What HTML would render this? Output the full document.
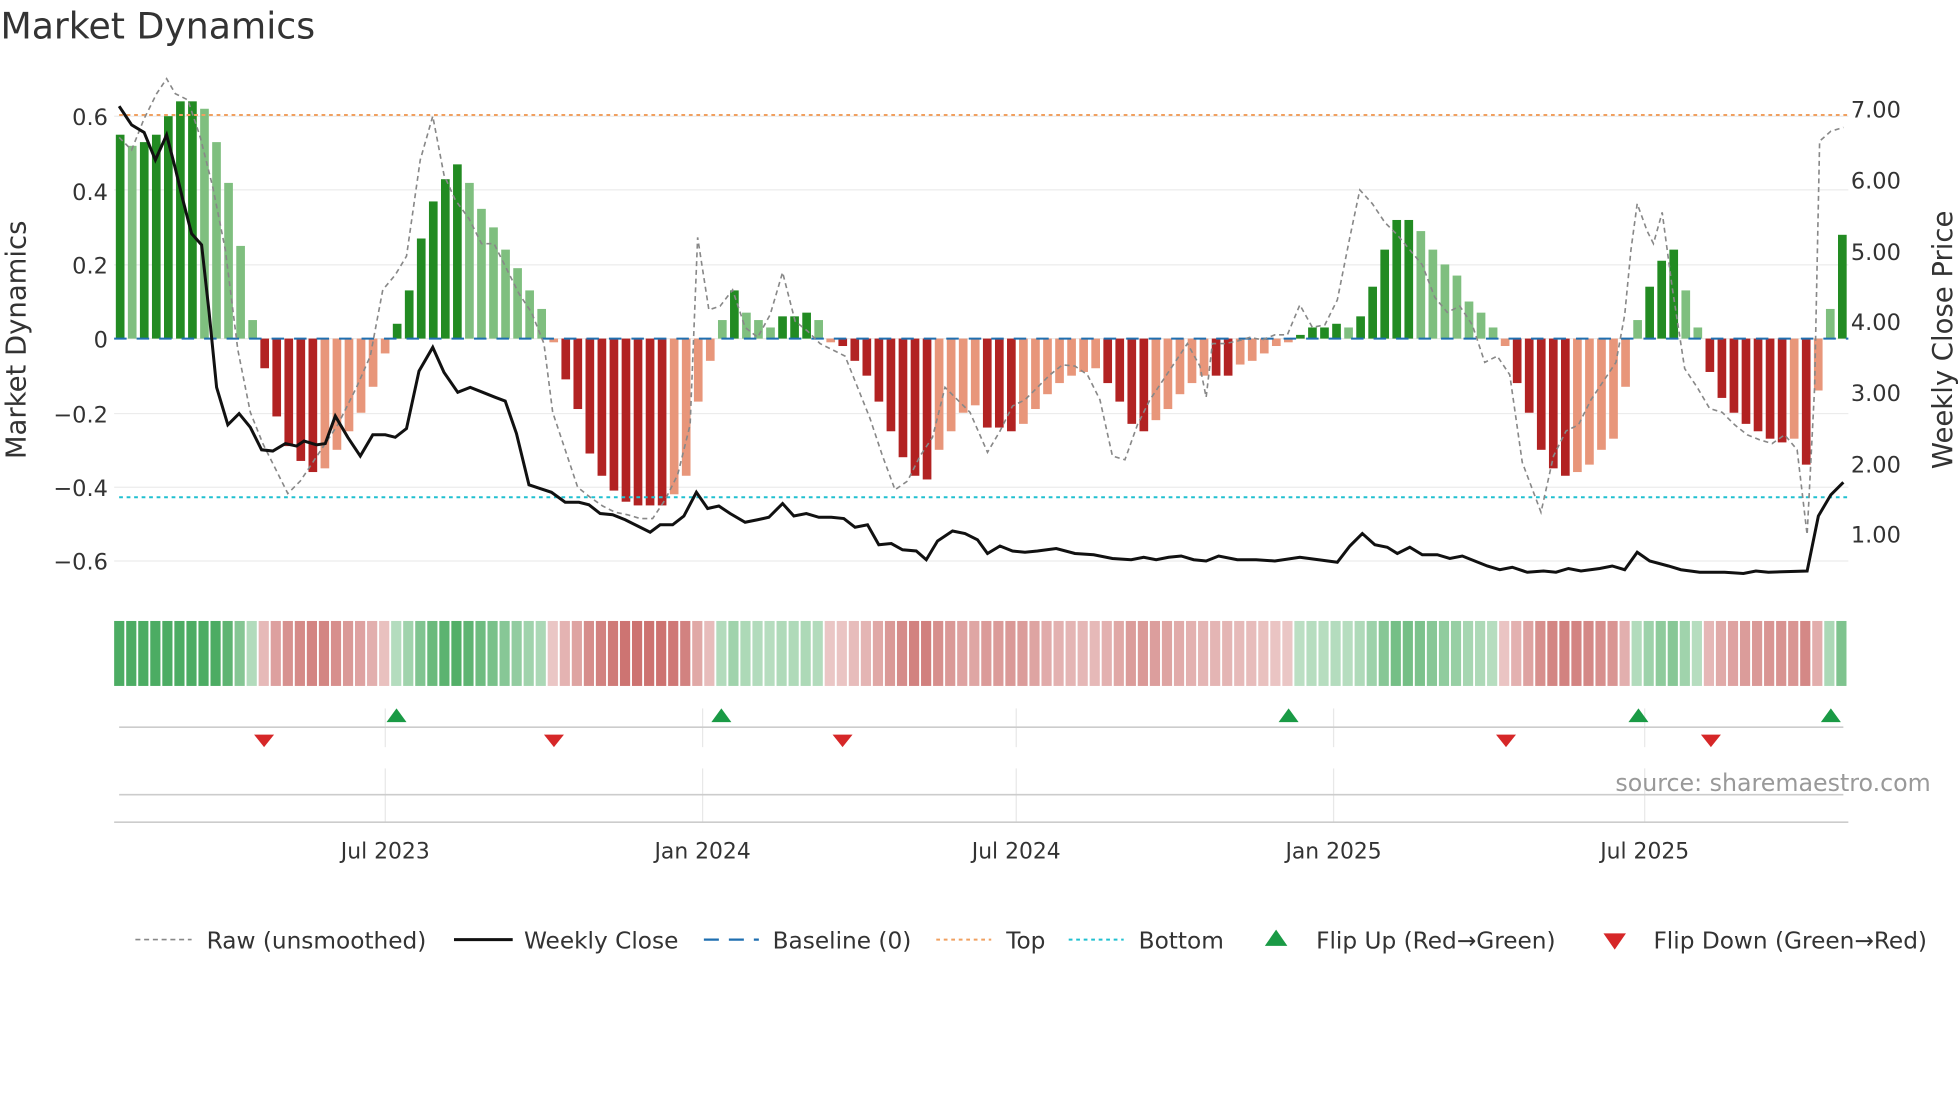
<!DOCTYPE html>
<html><head><meta charset="utf-8"><style>
html,body{margin:0;padding:0;background:#fff;}
svg{display:block;font-family:"DejaVu Sans","Liberation Sans",sans-serif;}
</style></head><body>
<svg id="s" width="1960" height="1102" viewBox="0 0 1568 882" xmlns="http://www.w3.org/2000/svg">
<text x="0" y="31" font-size="29" fill="#333">Market Dynamics</text>
<g id="grid" stroke="#ececec" stroke-width="1"></g>
<g id="bars"></g>
<g id="strip"></g>
<line x1="91" y1="271" x2="1479" y2="271" stroke="#1f6fb0" stroke-width="1.6" stroke-dasharray="10,8"/>
<line x1="95" y1="92" x2="1479" y2="92" stroke="#f0a060" stroke-width="1.6" stroke-dasharray="3,3"/>
<line x1="95" y1="398" x2="1479" y2="398" stroke="#20c0d0" stroke-width="1.6" stroke-dasharray="3,3"/>
<polyline id="raw" fill="none" stroke="#888" stroke-width="1.3" stroke-dasharray="4,3"/>
<polyline id="close" fill="none" stroke="#111" stroke-width="2.4"/>
<g font-size="18" fill="#333" text-anchor="end">
<text x="86" y="100">0.6</text><text x="86" y="160">0.4</text><text x="86" y="219">0.2</text><text x="86" y="278">0</text>
<text x="86" y="338">−0.2</text><text x="86" y="397">−0.4</text><text x="86" y="456">−0.6</text>
</g>
<g font-size="18" fill="#333">
<text x="1481" y="94">7.00</text><text x="1481" y="151">6.00</text><text x="1481" y="208">5.00</text><text x="1481" y="264">4.00</text>
<text x="1481" y="321">3.00</text><text x="1481" y="378">2.00</text><text x="1481" y="434">1.00</text>
</g>
<text transform="translate(20,272) rotate(-90)" font-size="22" fill="#333" text-anchor="middle">Market Dynamics</text>
<text transform="translate(1562,272) rotate(-90)" font-size="22" fill="#333" text-anchor="middle">Weekly Close Price</text>
<g stroke="#e8e8e8"><line x1="308" y1="567" x2="308" y2="598"/><line x1="562" y1="567" x2="562" y2="598"/><line x1="813" y1="567" x2="813" y2="598"/><line x1="1067" y1="567" x2="1067" y2="598"/><line x1="1316" y1="567" x2="1316" y2="598"/>
<line x1="308" y1="615" x2="308" y2="658"/><line x1="562" y1="615" x2="562" y2="658"/><line x1="813" y1="615" x2="813" y2="658"/><line x1="1067" y1="615" x2="1067" y2="658"/><line x1="1316" y1="615" x2="1316" y2="658"/></g>
<line x1="95" y1="582" x2="1475" y2="582" stroke="#ccc" stroke-width="1.3"/>
<line x1="95" y1="636" x2="1475" y2="636" stroke="#ccc" stroke-width="1.3"/>
<line x1="91" y1="658" x2="1479" y2="658" stroke="#ccc" stroke-width="1.3"/>
<g fill="#1a9a45"><path d="M309,578 L317,567 L325,578Z"/><path d="M569,578 L577,567 L585,578Z"/><path d="M1023,578 L1031,567 L1039,578Z"/><path d="M1303,578 L1311,567 L1319,578Z"/><path d="M1457,578 L1465,567 L1473,578Z"/></g>
<g fill="#d62728"><path d="M203,588 L211,598 L219,588Z"/><path d="M435,588 L443,598 L451,588Z"/><path d="M666,588 L674,598 L682,588Z"/><path d="M1197,588 L1205,598 L1213,588Z"/><path d="M1361,588 L1369,598 L1377,588Z"/></g>
<text x="1545" y="633" font-size="19" fill="#999" text-anchor="end">source: sharemaestro.com</text>
<g font-size="17.5" fill="#333" text-anchor="middle"><text x="308" y="687">Jul 2023</text><text x="562" y="687">Jan 2024</text><text x="813" y="687">Jul 2024</text><text x="1067" y="687">Jan 2025</text><text x="1316" y="687">Jul 2025</text></g>
<g font-size="18.6" fill="#333">
<line x1="108" y1="752" x2="153" y2="752" stroke="#888" stroke-width="1.3" stroke-dasharray="4,3"/><text x="165" y="759">Raw (unsmoothed)</text>
<line x1="363" y1="752" x2="410" y2="752" stroke="#111" stroke-width="2.4"/><text x="419" y="759">Weekly Close</text>
<line x1="563" y1="752" x2="607" y2="752" stroke="#1f6fb0" stroke-width="1.8" stroke-dasharray="12,8"/><text x="618" y="759">Baseline (0)</text>
<line x1="749" y1="752" x2="793" y2="752" stroke="#f0a060" stroke-width="1.6" stroke-dasharray="3,3"/><text x="805" y="759">Top</text>
<line x1="855" y1="752" x2="899" y2="752" stroke="#20c0d0" stroke-width="1.6" stroke-dasharray="3,3"/><text x="911" y="759">Bottom</text>
<path d="M1012,757 L1021,744 L1030,757Z" fill="#1a9a45"/><text x="1053" y="759">Flip Up (Red→Green)</text>
<path d="M1283,747 L1292,760 L1301,747Z" fill="#d62728"/><text x="1323" y="759">Flip Down (Green→Red)</text>
</g>
</svg>
<script>
var NS="http://www.w3.org/2000/svg";
function el(t,a,p){var e=document.createElementNS(NS,t);for(var k in a)e.setAttribute(k,a[k]);document.getElementById(p).appendChild(e);return e;}
[93,152,212,271,331,390,449].forEach(function(y){el("line",{x1:91,x2:1479,y1:y,y2:y},"grid");});
var v=[0.55,0.52,0.53,0.55,0.6,0.64,0.64,0.62,0.53,0.42,0.25,0.05,
-0.08,-0.21,-0.29,-0.33,-0.36,-0.35,-0.3,-0.25,-0.2,-0.13,-0.04,
0.04,0.13,0.27,0.37,0.43,0.47,0.42,0.35,0.3,0.24,0.19,0.13,0.08,
-0.01,-0.11,-0.19,-0.31,-0.37,-0.41,-0.44,-0.45,-0.45,-0.45,-0.42,-0.37,-0.17,-0.06,
0.05,0.13,0.07,0.05,0.03,0.06,0.06,0.07,0.05,
-0.01,-0.02,-0.06,-0.1,-0.17,-0.25,-0.32,-0.37,-0.38,-0.3,-0.25,-0.2,-0.18,-0.24,-0.24,-0.25,-0.23,-0.19,-0.15,-0.12,-0.1,-0.09,-0.08,-0.12,-0.17,-0.23,-0.25,-0.22,-0.19,-0.15,-0.12,-0.1,-0.1,-0.1,-0.07,-0.06,-0.04,-0.02,-0.01,
0.01,0.03,0.03,0.04,0.03,0.06,0.14,0.24,0.32,0.32,0.29,0.24,0.2,0.17,0.1,0.07,0.03,
-0.02,-0.12,-0.2,-0.3,-0.35,-0.37,-0.36,-0.34,-0.3,-0.27,-0.13,
0.05,0.14,0.21,0.24,0.13,0.03,
-0.09,-0.16,-0.2,-0.23,-0.25,-0.27,-0.28,-0.27,-0.34,-0.14,0.08,0.28];
var N=v.length,step=1388/N,w=step*0.72;
for(var i=0;i<N;i++){
 var x=91+i*step+(step-w)/2,val=v[i],y0=271,h=val*296.7;
 var inc=i==0||Math.abs(val)>=Math.abs(v[i-1]);
 var c=val>=0?(inc?"#228b22":"#7fbf7f"):(inc?"#b22222":"#e8967a");
 el("rect",{x:x,y:val>=0?y0-h:y0,width:w,height:Math.abs(h),fill:c},"bars");
 var a=0.35+Math.min(Math.abs(val),0.5)*1.2;
 el("rect",{x:91+i*step,y:497,width:step-1.5,height:52,fill:val>=0?"#2e9e48":"#c0504d","fill-opacity":Math.min(a,0.95)*0.9},"strip");
}
document.getElementById("close").setAttribute("points","95,85 105,100 115,106 124,128 133,108 140,135 146,160 153,187 161,196 167,250 173,310 182,340 191,331 200,342 209,360 218,361 228,355 237,357 243,353 253,356 260,355 268,333 278,350 288,365 298,348 308,348 316,350 325,343 335,297 346,278 355,298 366,314 376,310 386,314 396,318 404,321 413,347 423,388 432,391 441,394 452,402 463,402 471,404 480,411 490,412 500,416 510,421 520,426 528,420 538,420 547,413 557,394 566,407 575,405 584,411 596,418 606,416 615,414 626,403 635,413 645,411 655,414 665,414 675,415 684,422 694,420 703,436 713,435 722,440 733,441 741,448 750,433 762,425 772,427 782,432 790,443 800,437 810,441 820,442 830,441 845,439 860,443 875,444 890,447 905,448 915,446 925,448 935,446 945,445 955,448 965,449 975,445 990,448 1005,448 1020,449 1040,446 1055,448 1070,450 1080,437 1090,427 1100,436 1110,438 1118,443 1128,438 1138,444 1150,444 1160,447 1170,445 1180,449 1190,453 1200,456 1210,454 1222,458 1235,457 1245,458 1255,455 1265,457 1280,455 1290,453 1300,456 1310,442 1320,449 1335,453 1345,456 1360,458 1380,458 1395,459 1405,457 1415,458 1446,457 1455,413 1465,396 1475,386");
document.getElementById("raw").setAttribute("points","95,110 105,120 115,95 125,75 133,63 140,75 150,80 160,110 170,150 180,200 190,280 200,330 210,355 220,375 230,395 240,385 250,370 260,355 270,340 285,310 296,285 306,232 316,220 325,205 336,128 346,93 355,140 364,160 375,175 385,195 395,195 405,215 415,235 425,250 435,275 442,330 452,360 462,390 472,398 482,405 492,410 502,412 512,415 522,415 532,400 542,380 552,340 558,190 567,248 576,245 586,232 596,262 606,270 616,252 626,218 636,257 646,265 656,275 666,280 676,285 686,310 696,335 706,365 716,392 726,385 736,365 746,350 756,310 766,320 776,330 790,362 800,345 810,325 820,320 830,310 840,300 850,292 860,293 870,300 880,320 890,365 900,368 910,340 920,320 930,305 940,290 950,275 960,293 965,318 970,275 980,275 990,273 1000,270 1010,272 1020,268 1030,268 1040,244 1050,262 1060,260 1070,240 1080,190 1088,152 1098,163 1108,178 1118,188 1128,200 1138,212 1148,238 1158,250 1168,245 1178,260 1188,290 1198,285 1208,300 1218,370 1233,410 1243,365 1253,345 1263,340 1273,320 1283,305 1293,290 1300,252 1305,200 1310,163 1318,185 1323,195 1330,170 1338,230 1348,295 1358,310 1368,327 1378,330 1388,340 1398,348 1408,352 1418,355 1428,348 1438,360 1446,428 1452,310 1456,113 1465,105 1475,102");
</script>
</body></html>
